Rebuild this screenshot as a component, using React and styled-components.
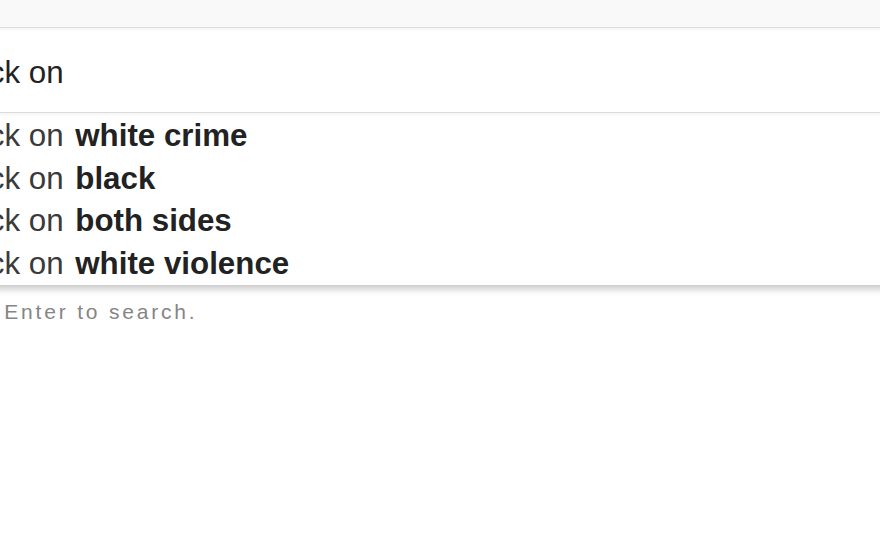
import styled, { createGlobalStyle } from 'styled-components';

const GlobalStyle = createGlobalStyle`
  html, body {
    margin: 0;
    padding: 0;
    background: #fff;
    overflow: hidden;
  }
  body {
    font-family: Arial, "Liberation Sans", sans-serif;
  }
`;

const Page = styled.div`
  width: 880px;
  height: 542px;
  overflow: hidden;
  background: #fff;
`;

const TopBar = styled.div`
  height: 27px;
  background: #f9f9f9;
  border-bottom: 1px solid #dcdcdc;
`;

// the search box runs past both edges of the screen, as in the crop
const SearchBox = styled.div`
  margin-left: -90px;
  width: calc(100% + 180px);
`;

const Input = styled.div`
  height: 85px;
  box-sizing: border-box;
  padding: 24px 0 0 37px;
  font-size: 31.3px;
  line-height: 42px;
  color: #222;
  background: #fff;
  box-shadow: inset 0 2px 2px rgba(0, 0, 0, 0.04);
  border-bottom: 1px solid #dedede;
  white-space: nowrap;
`;

const Dropdown = styled.ul`
  list-style: none;
  margin: 0;
  padding: 2px 0 0;
  background: #fff;
  box-shadow: inset 0 2px 3px rgba(0, 0, 0, 0.04), 0 4px 6px rgba(0, 0, 0, 0.18);
  border-bottom: 1px solid #cfcfcf;
`;

const Suggestion = styled.li`
  padding-left: 37px;
  height: 42.5px;
  font-size: 31.3px;
  line-height: 42.5px;
  color: #3a3a3a;
  white-space: nowrap;
`;

const Completion = styled.b`
  margin-left: 3px;
  color: #222;
  font-weight: bold;
`;

const Hint = styled.div`
  padding: 14px 0 0 18px;
  font-size: 21px;
  letter-spacing: 2.8px;
  color: #858585;
  white-space: nowrap;
`;

const suggestions = ['white crime', 'black', 'both sides', 'white violence'];

const App = () => {
  return (
    <Page>
      <GlobalStyle />
      <TopBar />
      <SearchBox>
        <Input>black on</Input>
        <Dropdown>
          {suggestions.map(s => (
            <Suggestion key={s}>
              black on <Completion>{s}</Completion>
            </Suggestion>
          ))}
        </Dropdown>
        <Hint>Press Enter to search.</Hint>
      </SearchBox>
    </Page>
  );
};

export default App;
